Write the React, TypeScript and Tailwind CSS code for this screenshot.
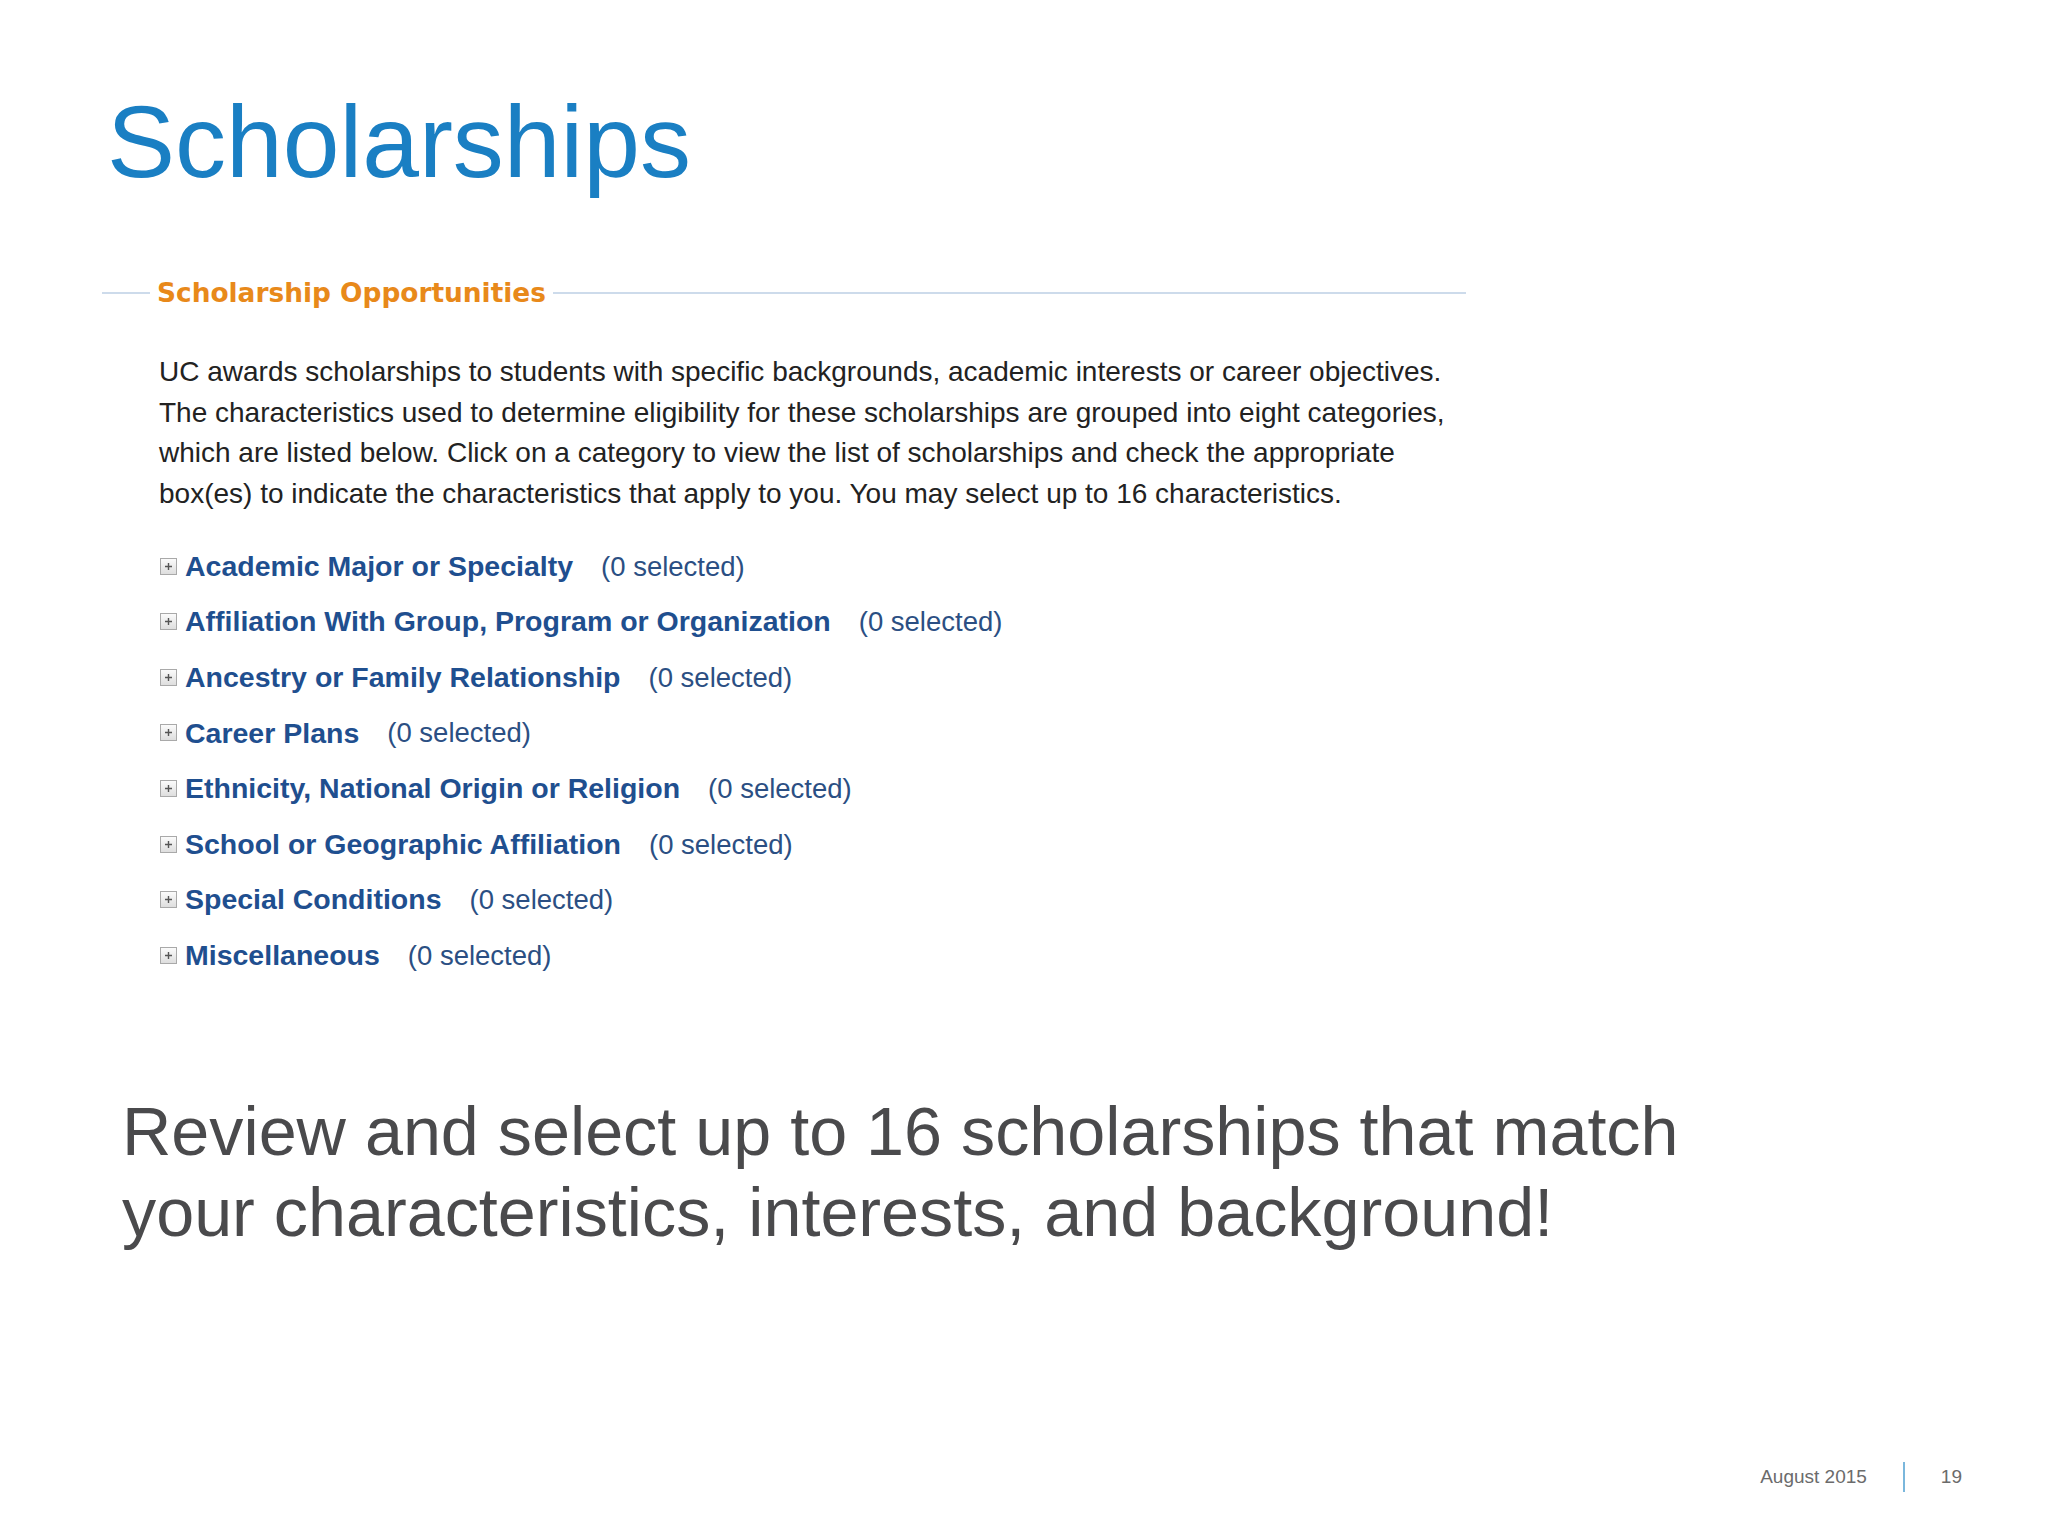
const CATEGORIES = [
  "Academic Major or Specialty",
  "Affiliation With Group, Program or Organization",
  "Ancestry or Family Relationship",
  "Career Plans",
  "Ethnicity, National Origin or Religion",
  "School or Geographic Affiliation",
  "Special Conditions",
  "Miscellaneous",
];

function PlusBox() {
  return (
    <span className="mr-[8px] inline-flex h-[17px] w-[17px] shrink-0 items-center justify-center border border-[#a9a9a9] bg-gradient-to-b from-[#fbfbfb] to-[#dedede]">
      <svg width="11" height="11" viewBox="0 0 11 11">
        <path d="M5.5 2v7M2 5.5h7" stroke="#555" strokeWidth="1.4" />
      </svg>
    </span>
  );
}

export default function App() {
  return (
    <div className="flex h-[1536px] w-[2048px] flex-col bg-white font-['Liberation_Sans',Arial,sans-serif]">
      <div className="pl-[107px] pt-[91px] text-[102px] leading-none text-[#1a7fc3]">Scholarships</div>

      <div className="ml-[102px] mt-[87px] w-[1364px]">
        <div className="flex items-center">
          <div className="h-[2px] w-[48px] bg-[#cddbeb]" />
          <div className="px-[7px] font-['DejaVu_Sans',sans-serif] text-[26.4px] font-bold leading-none text-[#e8891a]">
            Scholarship Opportunities
          </div>
          <div className="h-[2px] flex-1 bg-[#cddbeb]" />
        </div>

        <p className="ml-[57px] mt-[46px] text-[28px] leading-[40.5px] text-[#222]">
          UC awards scholarships to students with specific backgrounds, academic interests or career objectives.
          <br />
          The characteristics used to determine eligibility for these scholarships are grouped into eight categories,
          <br />
          which are listed below. Click on a category to view the list of scholarships and check the appropriate
          <br />
          box(es) to indicate the characteristics that apply to you. You may select up to 16 characteristics.
        </p>

        <div className="ml-[58px] mt-[24px] flex flex-col">
          {CATEGORIES.map((c) => (
            <div key={c} className="flex h-[55.6px] items-center">
              <PlusBox />
              <span className="text-[28.5px] font-bold text-[#1f4f8f]">{c}</span>
              <span className="ml-[28px] text-[27.5px] text-[#2b4f83]">(0 selected)</span>
            </div>
          ))}
        </div>
      </div>

      <div className="ml-[122px] mt-[108px] text-[68.3px] leading-[81px] text-[#4a4a4c]">
        Review and select up to 16 scholarships that match
        <br />
        your characteristics, interests, and background!
      </div>

      <div className="mb-[44px] mr-[86px] mt-auto flex items-center justify-end text-[19px] text-[#6b6b6b]">
        <span>August 2015</span>
        <span className="mx-[36px] h-[30px] w-[2px] bg-[#7ab7dc]" />
        <span>19</span>
      </div>
    </div>
  );
}
